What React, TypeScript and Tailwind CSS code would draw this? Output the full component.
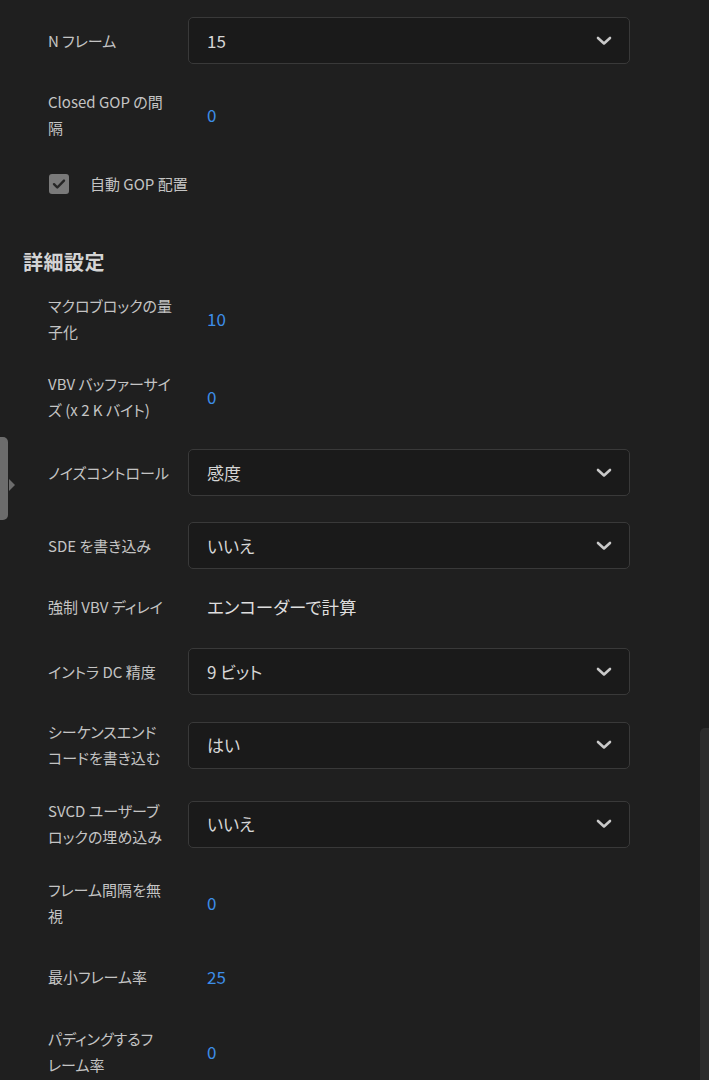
import React from "react";

type Row =
  | { kind: "select"; label: string[]; value: string; mt: number }
  | { kind: "number"; label: string[]; value: string; mt: number }
  | { kind: "text"; label: string[]; value: string; mt: number }
  | { kind: "check"; label: string; mt: number }
  | { kind: "header"; label: string; mt: number };

const rows: Row[] = [
  { kind: "select", label: ["N フレーム"], value: "15", mt: 17 },
  { kind: "number", label: ["Closed GOP の間", "隔"], value: "0", mt: 25 },
  { kind: "check", label: "自動 GOP 配置", mt: 30 },
  { kind: "header", label: "詳細設定", mt: 51 },
  { kind: "number", label: ["マクロブロックの量", "子化"], value: "10", mt: 17 },
  { kind: "number", label: ["VBV バッファーサイ", "ズ (x 2 K バイト)"], value: "0", mt: 26 },
  { kind: "select", label: ["ノイズコントロール"], value: "感度", mt: 26 },
  { kind: "select", label: ["SDE を書き込み"], value: "いいえ", mt: 26 },
  { kind: "text", label: ["強制 VBV ディレイ"], value: "エンコーダーで計算", mt: 25 },
  { kind: "select", label: ["イントラ DC 精度"], value: "9 ビット", mt: 28 },
  { kind: "select", label: ["シーケンスエンド", "コードを書き込む"], value: "はい", mt: 24 },
  { kind: "select", label: ["SVCD ユーザーブ", "ロックの埋め込み"], value: "いいえ", mt: 27 },
  { kind: "number", label: ["フレーム間隔を無", "視"], value: "0", mt: 27 },
  { kind: "number", label: ["最小フレーム率"], value: "25", mt: 35 },
  { kind: "number", label: ["パディングするフ", "レーム率"], value: "0", mt: 36 },
];

const font = "font-['Noto_Sans_CJK_JP','Noto_Sans',sans-serif] [font-feature-settings:'palt']";

function Chevron() {
  return (
    <svg width="16" height="10" viewBox="0 0 16 10" fill="none">
      <path d="M2 2l6 5.5L14 2" stroke="#c9c9c9" strokeWidth="2.6" strokeLinecap="round" strokeLinejoin="round" />
    </svg>
  );
}

function Label({ lines }: { lines: string[] }) {
  return (
    <div className="w-[140px] shrink-0 text-[15px] leading-[26px] text-[#c4c4c4]">
      {lines.map((l, i) => (
        <div key={i} className="whitespace-nowrap">
          {l}
        </div>
      ))}
    </div>
  );
}

function RowView({ row }: { row: Row }) {
  if (row.kind === "header") {
    return (
      <div style={{ marginTop: row.mt }} className="pl-[23px] text-[20px] leading-[28px] font-bold text-[#d4d4d4] tracking-[0.5px]">
        {row.label}
      </div>
    );
  }
  if (row.kind === "check") {
    return (
      <div style={{ marginTop: row.mt }} className="flex items-center pl-[49px] h-[26px]">
        <div className="w-[20px] h-[20px] rounded-[3px] bg-[#7a7a7a] flex items-center justify-center">
          <svg width="14" height="12" viewBox="0 0 14 12" fill="none">
            <path d="M2 6.2l3.3 3.3L12 2.6" stroke="#262626" strokeWidth="2.4" strokeLinecap="round" strokeLinejoin="round" />
          </svg>
        </div>
        <span className="ml-[21px] text-[15px] leading-[26px] text-[#c4c4c4]">{row.label}</span>
      </div>
    );
  }
  return (
    <div style={{ marginTop: row.mt }} className="flex items-center pl-[48px] pr-[70px]">
      <Label lines={row.label} />
      {row.kind === "select" && (
        <div className="flex-1 h-[47px] rounded-[5px] border border-[#393939] bg-[#1a1a1a] flex items-center justify-between pl-[18px] pr-[17px]">
          <span className="text-[17px] leading-[26px] text-[#d6d6d6]">{row.value}</span>
          <Chevron />
        </div>
      )}
      {row.kind === "number" && (
        <div className="flex-1 pl-[19px] text-[17px] leading-[26px] text-[#3d8ee8]">{row.value}</div>
      )}
      {row.kind === "text" && (
        <div className="flex-1 pl-[19px] text-[17.5px] leading-[26px] text-[#dedede]">{row.value}</div>
      )}
    </div>
  );
}

export default function App() {
  return (
    <div className={`relative w-[709px] h-[1080px] overflow-hidden bg-[#1f1f1f] flex ${font}`}>
      <div className="flex-1 flex flex-col">
        {rows.map((r, i) => (
          <RowView key={i} row={r} />
        ))}
      </div>
      {/* scrollbar track */}
      <div className="w-[9px] bg-[#1c1c1c] flex flex-col pt-[728px]">
        <div className="flex-1 rounded-tl-[5px] bg-[#2c2c2c]" />
      </div>
      {/* collapsed side panel handle */}
      <div className="absolute left-0 top-[437px] w-[8px] h-[83px] rounded-r-[5px] bg-[#6c6c6c]" />
      <div className="absolute left-[9px] top-[479px] w-0 h-0 border-y-[6px] border-y-transparent border-l-[6px] border-l-[#6c6c6c]" />
    </div>
  );
}
